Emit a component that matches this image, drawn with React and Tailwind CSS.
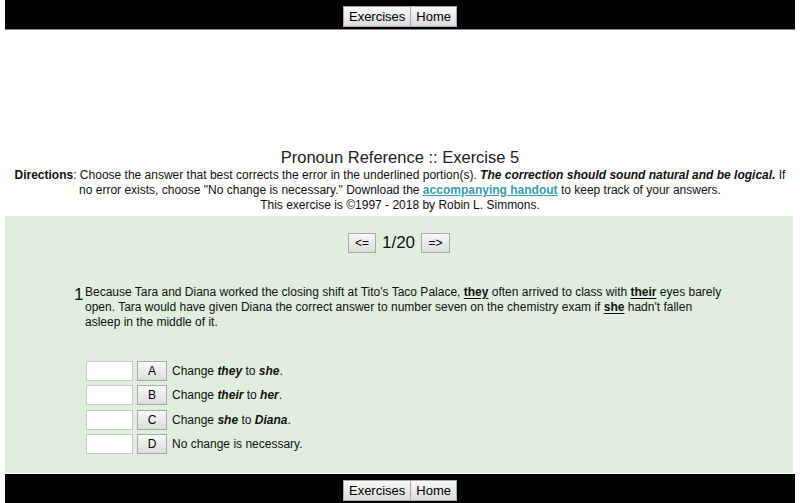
import React from 'react'

const btn = 'bg-gradient-to-b from-[#f8f8f8] to-[#dcdcdc] border border-[#a9a9a9] text-black leading-none'

function NavBar() {
  return (
    <div className="mx-[5px] h-[30px] bg-black flex justify-center items-start pt-[6px] border-b border-[#888]">
      <button className={`${btn} h-[21px] px-[5px] text-[13px]`}>Exercises</button>
      <button className={`${btn} h-[21px] px-[5px] text-[13px] border-l-0`}>Home</button>
    </div>
  )
}

const U = ({ children }) => <span className="font-bold underline underline-offset-2">{children}</span>
const BI = ({ children }) => <span className="font-bold italic">{children}</span>

const options = [
  ['A', <>Change <BI>they</BI> to <BI>she</BI>.</>],
  ['B', <>Change <BI>their</BI> to <BI>her</BI>.</>],
  ['C', <>Change <BI>she</BI> to <BI>Diana</BI>.</>],
  ['D', <>No change is necessary.</>],
]

export default function App() {
  return (
    <div className="w-[800px] h-[503px] bg-white overflow-hidden text-[#111]" style={{ fontFamily: '"Liberation Sans", Arial, sans-serif' }}>
      <NavBar />
      <div className="h-[116px]" />
      <div className="text-center">
        <h1 className="text-[16.5px] leading-[22px] text-[#222]">Pronoun Reference :: Exercise 5</h1>
        <p className="text-[12px] leading-[15px] px-[12px]">
          <b>Directions</b>: Choose the answer that best corrects the error in the underlined portion(s). <BI>The correction should sound natural and be logical.</BI> If no error exists, choose "No change is necessary." Download the <a className="text-[#3a9bb0] font-bold underline">accompanying handout</a> to keep track of your answers.
          <br />This exercise is ©1997 - 2018 by Robin L. Simmons.
        </p>
      </div>
      <div className="mx-[5px] mr-[7px] mt-[3px] h-[257px] bg-[#dfeedd] flex flex-col">
        <div className="flex justify-center items-center gap-[6px] mt-[14px]">
          <button className={`${btn} w-[28px] h-[20px] text-[12px]`}>&lt;=</button>
          <span className="text-[17px]">1/20</span>
          <button className={`${btn} w-[29px] h-[20px] text-[12px]`}>=&gt;</button>
        </div>
        <div className="flex mt-[27px] pl-[69px] pr-[70px]">
          <span className="text-[17px] leading-[20px] w-[11px] shrink-0 pt-[2px]">1</span>
          <p className="text-[12px] leading-[15px] pt-[2px]">
            Because Tara and Diana worked the closing shift at Tito's Taco Palace, <U>they</U> often arrived to class with <U>their</U> eyes barely open. Tara would have given Diana the correct answer to number seven on the chemistry exam if <U>she</U> hadn't fallen asleep in the middle of it.
          </p>
        </div>
        <div className="flex flex-col gap-[4px] mt-[31px] pl-[81px]">
          {options.map(([l, t]) => (
            <div key={l} className="flex items-center h-[20.5px]">
              <div className="w-[47px] h-[20px] bg-white border border-[#c8c8c8]" />
              <button className={`${btn} ml-[4px] w-[30px] h-[20px] text-[12px]`}>{l}</button>
              <span className="ml-[5px] text-[12px]">{t}</span>
            </div>
          ))}
        </div>
      </div>
      <div className="mt-[1px]">
        <NavBar />
      </div>
    </div>
  )
}
